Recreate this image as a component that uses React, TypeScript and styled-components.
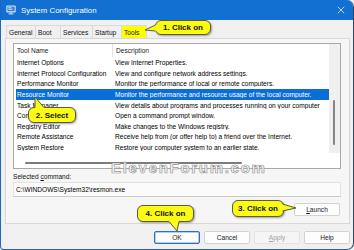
import React from 'react';
import styled, { createGlobalStyle } from 'styled-components';

const FONT = `"Liberation Sans", Arial, sans-serif`;

const Global = createGlobalStyle`
  html, body { margin: 0; padding: 0; width: 354px; height: 250px; overflow: hidden; background: #f0f0f0; }
  #root { width: 354px; height: 250px; }
  * { box-sizing: border-box; }
`;

const Window = styled.div`
  position: relative;
  width: 354px;
  height: 250px;
  display: flex;
  flex-direction: column;
  background: #f0f0f0;
  border-left: 1px solid #1c67c2;
  border-right: 1px solid #34475f;
  border-bottom: 1px solid #2b5e9a;
  border-bottom-right-radius: 7px;
  border-bottom-left-radius: 4px;
  border-top-right-radius: 7px;
  overflow: hidden;
  font-family: ${FONT};
  color: #000;
`;

const TitleBar = styled.div`
  height: 20px;
  flex: none;
  background: #1170d2;
  display: flex;
  align-items: center;
  padding: 0 8px 0 5px;
  gap: 5px;
  color: #fff;
`;

const TitleText = styled.span`
  font-size: 7.8px;
  flex: 1;
  letter-spacing: 0.05px;
`;

const Tabs = styled.div`
  display: flex;
  height: 13px;
  margin: 5px 0 0 5px;
  flex: none;
`;

const Tab = styled.div<{ $w: number; $active?: boolean }>`
  width: ${p => p.$w}px;
  height: 13px;
  font-size: 6.6px;
  display: flex;
  align-items: center;
  padding-left: 2px;
  border: 1px solid #dadada;
  border-bottom: none;
  margin-right: -1px;
  background: ${p => (p.$active ? '#ffff00' : '#f0f0f0')};
  color: #111;
`;

const Panel = styled.div`
  flex: none;
  height: 186px;
  margin: 0 3px 0 4px;
  border: 1px solid #d8d8d8;
  background: #f6f6f6;
  padding: 4px 8px 0 7px;
  display: flex;
  flex-direction: column;
`;

const ListView = styled.div`
  height: 126px;
  border: 1px solid #a8a8a8;
  background: #fff;
  display: grid;
  grid-template-columns: 1fr 11px;
  grid-template-rows: 1fr 15px;
`;

const ListBody = styled.div`
  display: flex;
  flex-direction: column;
  overflow: hidden;
`;

const HeaderRow = styled.div`
  height: 13.4px;
  flex: none;
  display: grid;
  grid-template-columns: 97px 1fr;
  margin-left: 2px;
  font-size: 6.6px;
  align-items: center;
  color: #1a1a1a;
`;

const HeaderCell = styled.div<{ $divider?: boolean }>`
  height: 100%;
  display: flex;
  align-items: center;
  padding-left: ${p => (p.$divider ? '1px' : '3px')};
  border-right: ${p => (p.$divider ? '1px solid #e3e3e3' : 'none')};
`;

const Row = styled.div<{ $sel?: boolean }>`
  height: 10.6px;
  flex: none;
  display: grid;
  grid-template-columns: 98px 1fr;
  margin-left: 2px;
  align-items: center;
  font-size: 6.6px;
  white-space: nowrap;
  background: ${p => (p.$sel ? '#0a6ed6' : 'transparent')};
  color: ${p => (p.$sel ? '#fff' : '#000')};
`;

const Cell = styled.span`
  padding-left: 1px;
  overflow: hidden;
`;

const VTrack = styled.div`
  background: #f0f0f0;
  position: relative;
`;

const VThumb = styled.div`
  position: absolute;
  left: 4px;
  top: 56px;
  width: 2px;
  height: 45px;
  border-radius: 1px;
  background: #858585;
`;

const HTrack = styled.div`
  grid-column: 1 / span 2;
  padding: 9px 0 0 11px;
`;

const HThumb = styled.div`
  width: 217px;
  height: 2px;
  border-radius: 1px;
  background: #7c7c7c;
`;

const Label = styled.div`
  margin-top: 2px;
  height: 10px;
  font-size: 6.6px;
  display: flex;
  align-items: center;
  white-space: pre;
  color: #111;
`;

const TextBox = styled.div`
  margin-top: 1px;
  height: 15px;
  border: 1px solid #e2e2e2;
  border-bottom-color: #c9c9c9;
  background: #fbfbfb;
  font-size: 6.6px;
  display: flex;
  align-items: center;
  padding-left: 2px;
`;

const LaunchRow = styled.div`
  margin-top: 6px;
  display: flex;
  justify-content: flex-end;
  padding-right: 1px;
`;

const Button = styled.div<{ $primary?: boolean; $disabled?: boolean }>`
  width: 46px;
  height: 13px;
  display: flex;
  align-items: center;
  justify-content: center;
  font-size: 6.6px;
  border-radius: 2px;
  border: 1px solid ${p => (p.$primary ? '#2d6fc4' : p.$disabled ? '#e3e3e3' : '#d2d2d2')};
  box-shadow: ${p => (p.$primary ? 'inset 0 0 0 0.5px #6d9de0' : 'none')};
  background: ${p => (p.$disabled ? '#f5f5f5' : '#fdfdfd')};
  color: ${p => (p.$disabled ? '#a3a3a3' : '#1a1a1a')};
`;

const Buttons = styled.div`
  display: flex;
  justify-content: flex-end;
  gap: 4px;
  margin: 7px 3px 0 0;
`;

const U = styled.span`
  text-decoration: underline;
`;

const Watermark = styled.div`
  position: absolute;
  left: 110px;
  top: 159px;
  font-family: "Liberation Sans", Arial, sans-serif;
  font-weight: 700;
  font-size: 15px;
  letter-spacing: 1.7px;
  color: rgba(255, 255, 255, 0.9);
  -webkit-text-stroke: 0.7px #959595;
  pointer-events: none;
`;

const Bubble = styled.div<{ $x: number; $y: number; $w: number; $h: number }>`
  position: absolute;
  left: ${p => p.$x}px;
  top: ${p => p.$y}px;
  width: ${p => p.$w}px;
  height: ${p => p.$h}px;
  background: #fbfb14;
  border: 1px solid #5a5a45;
  border-radius: 6px;
  box-shadow: 1px 1px 2px rgba(0, 0, 0, 0.35);
  display: flex;
  align-items: center;
  justify-content: center;
  font-family: ${FONT};
  font-weight: 700;
  font-size: 8px;
  color: #111;
  white-space: nowrap;
`;

const Overlay = styled.svg`
  position: absolute;
  left: -1px;
  top: 0;
  width: 354px;
  height: 250px;
  pointer-events: none;
`;

type P = [number, number];
const Pointer = ({ b1, tip, b2, in1, in2 }: { b1: P; tip: P; b2: P; in1: P; in2: P }) => (
  <g>
    <polygon points={[in1, b1, tip, b2, in2].map(p => p.join(',')).join(' ')} fill="#fbfb14" />
    <polyline points={[b1, tip, b2].map(p => p.join(',')).join(' ')} fill="none" stroke="#5a5a45" strokeWidth="1" />
  </g>
);

const AppIcon = () => (
  <svg width="10" height="10" viewBox="0 0 10 10">
    <rect x="0.5" y="0.8" width="9" height="6.4" rx="0.6" fill="#dfe9f5" stroke="#c4d3e6" strokeWidth="0.5" />
    <rect x="1.4" y="1.6" width="7.2" height="4.6" fill="#2f7fd8" />
    <rect x="2.3" y="2.4" width="3" height="0.8" fill="#fff" />
    <rect x="2.3" y="3.8" width="4.2" height="0.8" fill="#fff" />
    <rect x="4" y="7.2" width="2" height="1.3" fill="#b7c4d4" />
    <rect x="2.6" y="8.4" width="4.8" height="1" fill="#dfe6ef" />
  </svg>
);

const CloseIcon = () => (
  <svg width="8" height="8" viewBox="0 0 8 8">
    <path d="M0.8 0.8 L7.2 7.2 M7.2 0.8 L0.8 7.2" stroke="#e8f0fb" strokeWidth="0.8" />
  </svg>
);

const tools: [string, string][] = [
  ['Internet Options', 'View Internet Properties.'],
  ['Internet Protocol Configuration', 'View and configure network address settings.'],
  ['Performance Monitor', 'Monitor the performance of local or remote computers.'],
  ['Resource Monitor', 'Monitor the performance and resource usage of the local computer.'],
  ['Task Manager', 'View details about programs and processes running on your computer'],
  ['Command Prompt', 'Open a command prompt window.'],
  ['Registry Editor', 'Make changes to the Windows registry.'],
  ['Remote Assistance', 'Receive help from (or offer help to) a friend over the Internet.'],
  ['System Restore', 'Restore your computer system to an earlier state.'],
];

const tabs: [string, number][] = [
  ['General', 30],
  ['Boot', 26],
  ['Services', 33],
  ['Startup', 30],
  ['Tools', 26],
];

export default function App() {
  return (
    <>
      <Global />
      <Window>
        <TitleBar>
          <AppIcon />
          <TitleText>System Configuration</TitleText>
          <CloseIcon />
        </TitleBar>
        <Tabs>
          {tabs.map(([t, w]) => (
            <Tab key={t} $w={w} $active={t === 'Tools'}>
              {t}
            </Tab>
          ))}
        </Tabs>
        <Panel>
          <ListView>
            <ListBody>
              <HeaderRow>
                <HeaderCell $divider>Tool Name</HeaderCell>
                <HeaderCell>Description</HeaderCell>
              </HeaderRow>
              {tools.map(([n, d], i) => (
                <Row key={n} $sel={i === 3}>
                  <Cell>{n}</Cell>
                  <Cell>{d}</Cell>
                </Row>
              ))}
            </ListBody>
            <VTrack>
              <VThumb />
            </VTrack>
            <HTrack>
              <HThumb />
            </HTrack>
          </ListView>
          <Label>
            {'Selected '}<U>c</U>{'ommand:'}
          </Label>
          <TextBox>C:\WINDOWS\System32\resmon.exe</TextBox>
          <LaunchRow>
            <Button>
              <U>L</U>aunch
            </Button>
          </LaunchRow>
        </Panel>
        <Buttons>
          <Button $primary>OK</Button>
          <Button>Cancel</Button>
          <Button $disabled>
            <U>A</U>pply
          </Button>
          <Button>Help</Button>
        </Buttons>

        <Watermark>ElevenForum.com</Watermark>

        <Bubble $x={154} $y={20} $w={56} $h={15}>1. Click on</Bubble>
        <Bubble $x={27} $y={107} $w={48} $h={16}>2. Select</Bubble>
        <Bubble $x={231} $y={200} $w={52} $h={17}>3. Click on</Bubble>
        <Bubble $x={136} $y={205} $w={57} $h={17}>4. Click on</Bubble>

        <Overlay viewBox="0 0 354 250">
          <Pointer b1={[155.5, 25]} tip={[145, 30]} b2={[155.5, 31]} in1={[158, 25]} in2={[158, 31]} />
          <Pointer b1={[35, 107.5]} tip={[35, 97]} b2={[44, 107.5]} in1={[35, 110]} in2={[44, 110]} />
          <Pointer b1={[282.5, 204]} tip={[296, 208]} b2={[282.5, 211]} in1={[280, 204]} in2={[280, 211]} />
          <Pointer b1={[169, 221.5]} tip={[177, 231]} b2={[179, 221.5]} in1={[169, 219]} in2={[179, 219]} />
        </Overlay>
      </Window>
    </>
  );
}
